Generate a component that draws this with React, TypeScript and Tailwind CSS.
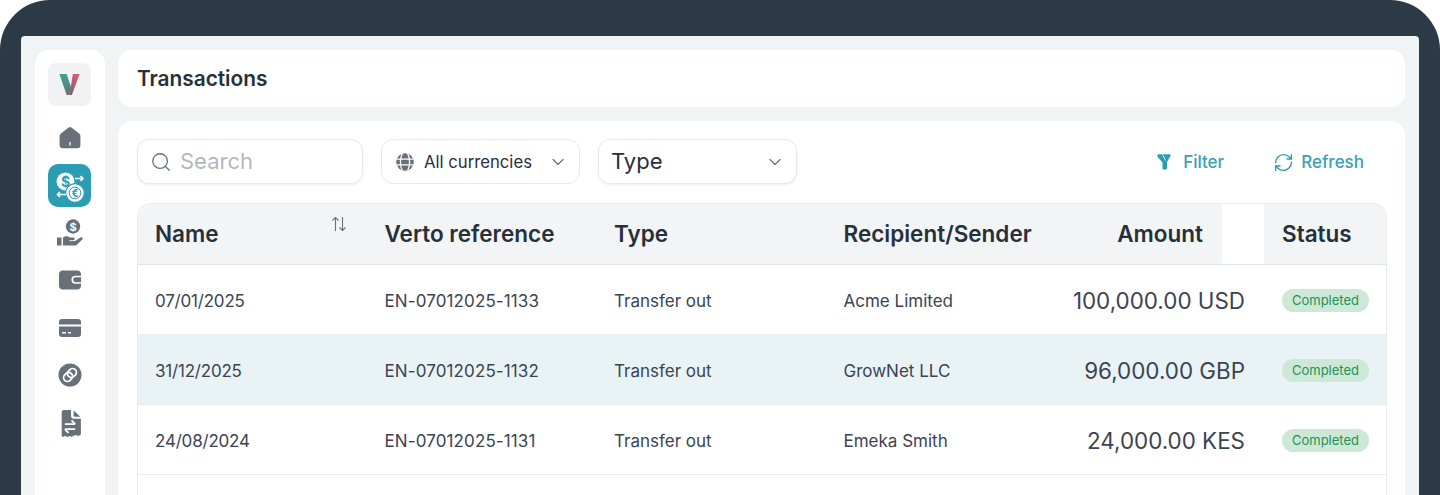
import React from 'react'
import { ChevronDown, RefreshCw, Search } from 'lucide-react'

const font = { fontFamily: 'Inter, "Liberation Sans", sans-serif' }

const rows = [
    { date: '07/01/2025', ref: 'EN-07012025-1133', type: 'Transfer out', who: 'Acme Limited', amount: '100,000.00 USD' },
    { date: '31/12/2025', ref: 'EN-07012025-1132', type: 'Transfer out', who: 'GrowNet LLC', amount: '96,000.00 GBP', active: true },
    { date: '24/08/2024', ref: 'EN-07012025-1131', type: 'Transfer out', who: 'Emeka Smith', amount: '24,000.00 KES' },
]

function Logo() {
    return (
        <svg width="23" height="23" viewBox="0 0 24 24">
            <defs>
                <linearGradient id="vl" x1="0" y1="0" x2="0" y2="1">
                    <stop offset="0" stopColor="#3aa58e" />
                    <stop offset="1" stopColor="#6b7178" />
                </linearGradient>
                <linearGradient id="vr" x1="0" y1="0" x2="0" y2="1">
                    <stop offset="0" stopColor="#e0566e" />
                    <stop offset="1" stopColor="#77686e" />
                </linearGradient>
            </defs>
            <path d="M1.500 1h7.500l5 15-2 7H9z" fill="url(#vl)" />
            <path d="M15.500 1H22.500l-8 22H12z" fill="url(#vr)" />
        </svg>
    )
}

function HomeIcon() {
    return (
        <svg width="24" height="24" viewBox="0 0 24 24" fill="#687079">
            <path fillRule="evenodd" d="M10.600 1.600a2.200 2.200 0 0 1 2.800 0l8 6.200c.6.500 1 1.200 1 2v9.400a3 3 0 0 1-3 3H4.600a3 3 0 0 1-3-3V9.800c0-.8.400-1.500 1-2zM11.400 16v3.500h1.200V16z" />
        </svg>
    )
}

function ExchangeIcon() {
    return (
        <svg width="36" height="36" viewBox="0 0 36 36">
            <circle cx="13.500" cy="13.500" r="9" fill="#fff" />
            <text x="13.500" y="18.500" textAnchor="middle" fontSize="14" fontWeight="700" fill="#2b9db3" fontFamily="Inter, sans-serif">$</text>
            <circle cx="23" cy="25" r="9.300" fill="#fff" stroke="#2b9db3" strokeWidth="1.200" />
            <circle cx="23" cy="25" r="5.800" fill="none" stroke="#2b9db3" strokeWidth="1" />
            <text x="23" y="28.800" textAnchor="middle" fontSize="10.500" fontWeight="700" fill="#2b9db3" fontFamily="Inter, sans-serif">€</text>
            <path d="M23 10.500h8M28.500 8l2.500 2.500-2.500 2.500M14 26.500H5.500M8 24l-2.500 2.500L8 29" fill="none" stroke="#fff" strokeWidth="1.600" />
        </svg>
    )
}

function HandIcon() {
    return (
        <svg width="28" height="28" viewBox="0 0 28 28" fill="#687079">
            <circle cx="17" cy="7.500" r="7.200" />
            <text x="17" y="11.500" textAnchor="middle" fontSize="11" fontWeight="700" fill="#fff" fontFamily="Inter, sans-serif">$</text>
            <path d="M1 18.500h4.500v8H1zM7 18.500c2.500-1.700 4.500-1.700 7 0h3.500c1.400 0 1.700 2.300 0 2.800h-4v1l5.500-.3 5.500-3.600c1.500-.8 3 .7 1.800 2L20 26.500H7z" />
        </svg>
    )
}

function WalletIcon() {
    return (
        <svg width="24" height="20" viewBox="0 0 24 20" fill="#687079">
            <path d="M5 0.500h14a4 4 0 0 1 4 4v11a4 4 0 0 1-4 4H5a4 4 0 0 1-4-4v-11a4 4 0 0 1 4-4z" />
            <path d="M24 6.500h-6.500a3.200 3.200 0 0 0 0 6.500H24" fill="none" stroke="#fff" strokeWidth="1.700" />
        </svg>
    )
}

function CardIcon() {
    return (
        <svg width="24" height="20" viewBox="0 0 24 20" fill="#687079">
            <path d="M1 4a3 3 0 0 1 3-3h16a3 3 0 0 1 3 3v2.500H1zM1 8.500h22V16a3 3 0 0 1-3 3H4a3 3 0 0 1-3-3z" />
            <path d="M4 14h4v1.500H4zM10 14h3v1.500h-3z" fill="#fff" />
        </svg>
    )
}

function LinkIcon() {
    return (
        <svg width="24" height="24" viewBox="0 0 24 24">
            <circle cx="12" cy="12" r="11.500" fill="#687079" />
            <g transform="rotate(-45 12 12)" fill="none" stroke="#fff" strokeWidth="1.800">
                <rect x="4.500" y="8.200" width="9.500" height="7.600" rx="3.800" />
                <rect x="10" y="8.200" width="9.500" height="7.600" rx="3.800" />
            </g>
        </svg>
    )
}

function DocIcon() {
    return (
        <svg width="26" height="29" viewBox="0 0 24 28" fill="#687079">
            <path d="M4 1h9v5.500a3 3 0 0 0 3 3h6.500v15l-2.500 1.500-2.500-1-2.500 1-1.500 1-1.500-1-2.500 1-2.500-1-2.500 1-.5-1.500V3a2 2 0 0 1 2-2z" />
            <path d="M15.500 1.500l6.500 6h-5a1.500 1.500 0 0 1-1.500-1.500z" />
            <path d="M7 14.500h10M13.500 11l3.500 3.500M17 19.500H7M10.500 23L7 19.500" fill="none" stroke="#fff" strokeWidth="1.700" />
        </svg>
    )
}

function GlobeIcon() {
    return (
        <svg width="18" height="18" viewBox="0 0 18 18" fill="#687079">
            <circle cx="9" cy="9" r="8.800" />
            <path d="M6.400.5c-1.300 2.200-2 5-2 8.500s.7 6.300 2 8.500M11.600.5c1.300 2.200 2 5 2 8.500s-.7 6.300-2 8.500M.3 6.200h17.400M.3 11.800h17.400" fill="none" stroke="#fff" strokeWidth="1.300" />
        </svg>
    )
}

function FunnelIcon() {
    return (
        <svg width="14" height="16" viewBox="0 0 14 16" fill="#2b9db3">
            <path d="M.3 1.800C.3.800.9.300 1.800.300h10.400c1 0 1.700.6 1.400 1.500L10 8v6c0 1.100-1 1.700-2.500 1.700S5.500 15 5.500 14V8.500L.9 3.200C.5 2.800.3 2.400.3 1.800z" />
            <path d="M5.500 .5l3 6" stroke="#fff" strokeWidth=".8" />
        </svg>
    )
}

function SortIcon() {
    return (
        <svg width="16" height="16" viewBox="0 0 16 16" fill="none" stroke="#687079" strokeWidth="1.100">
            <path d="M4.500 15V1.500M1.500 4.500l3-3 3 3" />
            <path d="M11.500 1v13.500M8.500 11.500l3 3 3-3" />
        </svg>
    )
}

function Badge() {
    return <span className="inline-flex h-[23px] w-[87px] items-center justify-center rounded-full bg-[#cde8d7] text-[13px] text-[#1f9254]">Completed</span>
}

export default function App() {
    return (
        <div style={font} className="h-[495px] w-[1440px] overflow-hidden bg-white">
            <div className="h-[495px] rounded-t-[50px] bg-[#2c3a47] px-[21px] pt-[36px]">
                <div className="flex h-[459px] gap-[13px] overflow-hidden rounded-t-[4px] bg-[#f1f4f4] px-[14px] pt-[14px]">
                    <div className="flex h-[600px] w-[70px] shrink-0 flex-col items-center rounded-[14px] bg-white pr-[1px] pt-[13px]">
                        <div className="flex h-[43px] w-[43px] items-center justify-center rounded-[8px] bg-[#f1f2f3]"><Logo /></div>
                        <div className="mt-[20px] flex h-[24px] items-center"><HomeIcon /></div>
                        <div className="mt-[14px] flex h-[43px] w-[43px] items-center justify-center rounded-[10px] bg-[#2b9db3]"><ExchangeIcon /></div>
                        <div className="mt-[12px] flex h-[28px] items-center"><HandIcon /></div>
                        <div className="mt-[23px] flex h-[20px] items-center"><WalletIcon /></div>
                        <div className="mt-[28px] flex h-[20px] items-center"><CardIcon /></div>
                        <div className="mt-[25px] flex h-[24px] items-center"><LinkIcon /></div>
                        <div className="mt-[22px] flex h-[28px] items-center"><DocIcon /></div>
                    </div>

                    <div className="min-w-0 flex-1">
                        <div className="flex h-[57px] items-center rounded-[14px] bg-white pl-[19px] text-[20.800px] font-semibold text-[#27303a]">Transactions</div>

                        <div className="mt-[14px] h-[600px] rounded-[14px] bg-white px-[19px] pt-[18px]">
                            <div className="flex h-[45px] items-center">
                                <div className="flex h-[45px] w-[226px] items-center rounded-[12px] border border-[#e6e8ea] bg-white pl-[12px] shadow-[0_1px_2px_rgba(16,24,40,0.08)]">
                                    <Search size={22} strokeWidth={1.400} className="text-[#687079]" />
                                    <span className="ml-[8px] text-[22px] text-[#b4b8bd]">Search</span>
                                </div>
                                <div className="ml-[18px] flex h-[45px] w-[199px] items-center rounded-[12px] border border-[#e6e8ea] bg-white pl-[14px]">
                                    <GlobeIcon />
                                    <span className="ml-[10px] pt-[3px] text-[16.700px] text-[#27303a]">All currencies</span>
                                    <ChevronDown size={20} strokeWidth={1.400} className="ml-auto mr-[11px] text-[#687079]" />
                                </div>
                                <div className="ml-[18px] flex h-[45px] w-[199px] items-center rounded-[12px] border border-[#e6e8ea] bg-white pl-[12px] shadow-[0_1px_2px_rgba(16,24,40,0.08)]">
                                    <span className="text-[22px] text-[#27303a]">Type</span>
                                    <ChevronDown size={20} strokeWidth={1.400} className="ml-auto mr-[11px] text-[#687079]" />
                                </div>
                                <div className="ml-auto flex items-center pt-[1px] text-[17px] font-medium text-[#3d9fb3]">
                                    <FunnelIcon />
                                    <span className="ml-[12px] pt-[2px]">Filter</span>
                                    <RefreshCw size={21} strokeWidth={1.600} className="ml-[49px] text-[#2b9db3]" />
                                    <span className="ml-[7px] mr-[22px] pt-[2px]">Refresh</span>
                                </div>
                            </div>

                            <div className="mt-[19px] h-[400px] w-[1250px] overflow-hidden rounded-t-[14px] border-x border-t border-[#e9ebed]">
                                <div className="flex h-[61px] border-b border-[#e4e6e8] text-[22.500px] font-semibold text-[#27303a]">
                                    <div className="flex w-[1084px] items-center bg-[#f2f4f5] pl-[17px]">
                                        <div className="relative w-[229.500px]">Name<div className="absolute left-[176px] top-[-1px]"><SortIcon /></div></div>
                                        <div className="w-[229.500px]">Verto reference</div>
                                        <div className="w-[229.500px]">Type</div>
                                        <div className="w-[229.500px] whitespace-nowrap">Recipient/Sender</div>
                                        <div className="w-[130px] text-right">Amount</div>
                                    </div>
                                    <div className="w-[42px] bg-white" />
                                    <div className="flex flex-1 items-center bg-[#f2f4f5] pl-[18px]">Status</div>
                                </div>
                                {rows.map((r, idx) => (
                                    <div key={idx} className={`flex h-[70px] items-center border-b border-[#e9ebed] text-[17px] text-[#3b4450] ${r.active ? 'bg-[#e9f3f6]' : 'bg-white'}`}>
                                        <div className="w-[246.500px] pl-[17px] pt-[4px] tracking-[-0.2px]">{r.date}</div>
                                        <div className="w-[229.500px] pt-[4px] tracking-[0.12px]">{r.ref}</div>
                                        <div className="w-[229.500px] pt-[4px]">{r.type}</div>
                                        <div className="w-[200px] pt-[4px]">{r.who}</div>
                                        <div className="w-[201.500px] pt-[3px] text-right text-[22.400px] text-[#3b4450]">{r.amount}</div>
                                        <div className="ml-[37px] flex pt-[2px]"><Badge /></div>
                                    </div>
                                ))}
                            </div>
                        </div>
                    </div>
                </div>
            </div>
        </div>
    )
}
